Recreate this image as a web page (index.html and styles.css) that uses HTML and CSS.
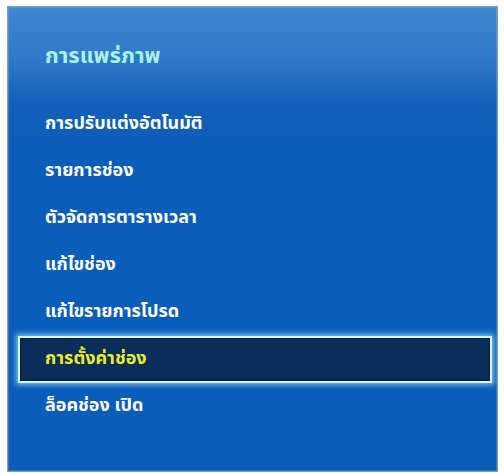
FILE: index.html
```html
<!DOCTYPE html>
<html lang="th">
<head>
<meta charset="utf-8">
<link rel="stylesheet" href="styles.css">
</head>
<body>
<div class="panel">
  <div class="title">การแพร่ภาพ</div>
  <ul class="menu">
    <li class="item">การปรับแต่งอัตโนมัติ</li>
    <li class="item">รายการช่อง</li>
    <li class="item">ตัวจัดการตารางเวลา</li>
    <li class="item">แก้ไขช่อง</li>
    <li class="item">แก้ไขรายการโปรด</li>
    <li class="item selected">การตั้งค่าช่อง</li>
    <li class="item">ล็อคช่อง เปิด</li>
  </ul>
</div>
</body>
</html>
```
FILE: styles.css
```css
html, body {
  margin: 0;
  padding: 0;
  background: #ffffff;
}
body {
  padding: 6px 6px 1px 7px;
  font-family: "Noto Sans Thai", "Noto Sans", "DejaVu Sans", sans-serif;
}
.panel {
  box-sizing: border-box;
  width: 491px;
  height: 466px;
  border: 1px solid #7f9cbf;
  background: linear-gradient(180deg, #4086d0 0px, #2f7aca 50px, #125fb8 100px, #0b5dba 140px, #0b5dba 100%);
  box-shadow: inset 0 0 0 1px rgba(255,255,255,0.15);
  padding: 36px 5px 0 10px;
}
.title {
  color: #a9f2e6;
  font-size: 22px;
  font-weight: bold;
  line-height: 28px;
  padding-left: 27px;
  height: 28px;
}
.menu {
  list-style: none;
  margin: 30px 0 0 0;
  padding: 0;
}
.item {
  box-sizing: border-box;
  height: 47px;
  line-height: 42px;
  padding-left: 25px;
  color: #ffffff;
  font-size: 18px;
  font-weight: bold;
  border: 2px solid transparent;
}
.selected {
  background: #0b2d5a;
  color: #ecea2a;
  border-color: #d8f4ff;
  box-shadow: 0 0 5px 2px rgba(140, 220, 255, 0.8), inset 0 0 3px rgba(0,0,0,0.6);
}
```
